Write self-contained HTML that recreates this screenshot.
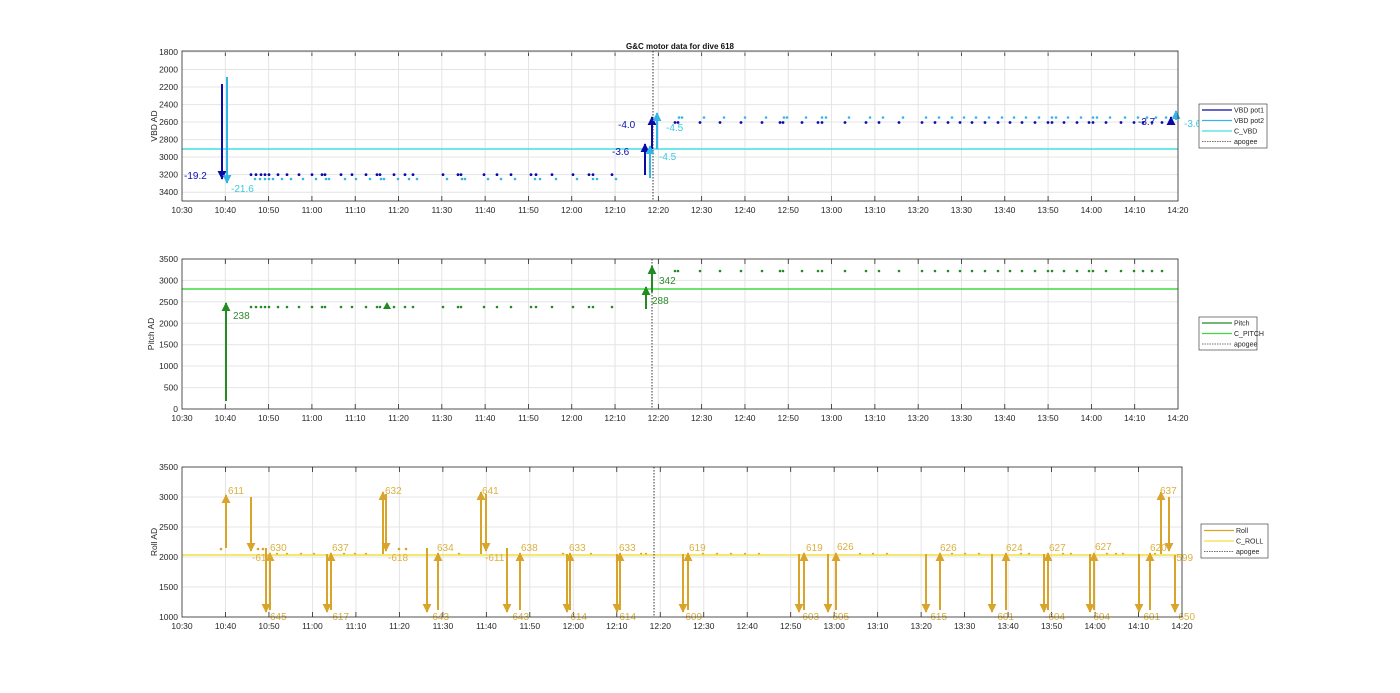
<!DOCTYPE html>
<html><head><meta charset="utf-8"><style>
html,body{margin:0;padding:0;background:#fff;}
svg{display:block;font-family:"Liberation Sans",sans-serif;}
.t{font-size:8.5px;fill:#262626;}
.yl{font-size:8.5px;fill:#262626;text-anchor:end;}
.xl{font-size:8.5px;fill:#262626;text-anchor:middle;}
.lg{font-size:7px;fill:#262626;}
.b{fill:#1010b0;font-size:10px;}
.c{fill:#3ec8e0;font-size:10px;}
.g{fill:#2e8b2e;font-size:10px;}
.r{fill:#dab040;font-size:10px;}
</style></head><body>
<svg width="1400" height="693" viewBox="0 0 1400 693" xmlns="http://www.w3.org/2000/svg">
<defs>
<marker id="mb" viewBox="0 0 10 10" refX="9" refY="5" markerWidth="9" markerHeight="9" markerUnits="userSpaceOnUse" orient="auto"><path d="M0,0L10,5L0,10z" fill="#0a0aa8"/></marker>
<marker id="mc" viewBox="0 0 10 10" refX="9" refY="5" markerWidth="9" markerHeight="9" markerUnits="userSpaceOnUse" orient="auto"><path d="M0,0L10,5L0,10z" fill="#33b5e8"/></marker>
<marker id="mg" viewBox="0 0 10 10" refX="9" refY="5" markerWidth="9" markerHeight="9" markerUnits="userSpaceOnUse" orient="auto"><path d="M0,0L10,5L0,10z" fill="#228b22"/></marker>
<marker id="mr" viewBox="0 0 10 10" refX="9" refY="5" markerWidth="9" markerHeight="9" markerUnits="userSpaceOnUse" orient="auto"><path d="M0,0L10,5L0,10z" fill="#d9a42a"/></marker>
</defs>
<g id="grids" stroke="#e4e4e4" stroke-width="1"></g>
<g id="dots"></g>

<!-- Title -->
<text x="680" y="49" text-anchor="middle" style="font-size:8px;font-weight:bold" fill="#111">G&amp;C motor data for dive 618</text>

<!-- TOP chart -->
<line x1="182" y1="149" x2="1178" y2="149" stroke="#40e0e0" stroke-width="1.5"/>
<line x1="653" y1="51" x2="653" y2="201" stroke="#333" stroke-width="1" stroke-dasharray="1.5,1.5"/>
<g stroke-width="2" fill="none">
<line x1="222" y1="84" x2="222" y2="179" stroke="#0a0aa8" marker-end="url(#mb)"/>
<line x1="227" y1="77" x2="227" y2="183" stroke="#33b5e8" marker-end="url(#mc)"/>
<line x1="645" y1="175" x2="645" y2="144" stroke="#0a0aa8" marker-end="url(#mb)"/>
<line x1="652" y1="149" x2="652" y2="117" stroke="#0a0aa8" marker-end="url(#mb)"/>
<line x1="650" y1="178" x2="650" y2="146" stroke="#33b5e8" marker-end="url(#mc)"/>
<line x1="657" y1="149" x2="657" y2="113" stroke="#33b5e8" marker-end="url(#mc)"/>
<line x1="1171" y1="124" x2="1171" y2="117" stroke="#0a0aa8" marker-end="url(#mb)"/>
<line x1="1176" y1="120" x2="1176" y2="111" stroke="#33b5e8" marker-end="url(#mc)"/>
</g>
<text class="b" x="184" y="179">-19.2</text>
<text class="c" x="231" y="192">-21.6</text>
<text class="b" x="618" y="128">-4.0</text>
<text class="b" x="612" y="155">-3.6</text>
<text class="c" x="666" y="131">-4.5</text>
<text class="c" x="659" y="160">-4.5</text>
<text class="b" x="1138" y="125">-3.7</text>
<text class="c" x="1184" y="127">-3.6</text>
<rect x="182" y="51" width="996" height="150" fill="none" stroke="#262626" stroke-width="0.8"/>
<text class="yl" x="178" y="55">1800</text><text class="yl" x="178" y="72.5">2000</text><text class="yl" x="178" y="90">2200</text><text class="yl" x="178" y="107.6">2400</text><text class="yl" x="178" y="125">2600</text><text class="yl" x="178" y="142.6">2800</text><text class="yl" x="178" y="160">3000</text><text class="yl" x="178" y="177.6">3200</text><text class="yl" x="178" y="195.2">3400</text>
<text class="t" transform="translate(157,126) rotate(-90)" text-anchor="middle">VBD AD</text>
<g id="xt1" class="xl"><text x="182" y="213">10:30</text><text x="225.3" y="213">10:40</text><text x="268.6" y="213">10:50</text><text x="311.9" y="213">11:00</text><text x="355.2" y="213">11:10</text><text x="398.5" y="213">11:20</text><text x="441.8" y="213">11:30</text><text x="485.1" y="213">11:40</text><text x="528.4" y="213">11:50</text><text x="571.7" y="213">12:00</text><text x="615" y="213">12:10</text><text x="658.3" y="213">12:20</text><text x="701.6" y="213">12:30</text><text x="744.9" y="213">12:40</text><text x="788.2" y="213">12:50</text><text x="831.5" y="213">13:00</text><text x="874.8" y="213">13:10</text><text x="918.1" y="213">13:20</text><text x="961.4" y="213">13:30</text><text x="1004.7" y="213">13:40</text><text x="1048" y="213">13:50</text><text x="1091.3" y="213">14:00</text><text x="1134.6" y="213">14:10</text><text x="1177.9" y="213">14:20</text></g>
<rect x="1199" y="104" width="68" height="44" fill="#fff" stroke="#262626" stroke-width="0.6"/>
<line x1="1202" y1="110" x2="1232" y2="110" stroke="#0a0aa8" stroke-width="1.3"/><text class="lg" x="1234" y="112.5">VBD pot1</text>
<line x1="1202" y1="120.5" x2="1232" y2="120.5" stroke="#33b5e8" stroke-width="1.3"/><text class="lg" x="1234" y="123">VBD pot2</text>
<line x1="1202" y1="131" x2="1232" y2="131" stroke="#40e0e0" stroke-width="1.3"/><text class="lg" x="1234" y="133.5">C_VBD</text>
<line x1="1202" y1="141.5" x2="1232" y2="141.5" stroke="#444" stroke-width="0.8" stroke-dasharray="1.5,1"/><text class="lg" x="1234" y="144">apogee</text>

<!-- PITCH chart -->
<line x1="182" y1="289" x2="1178" y2="289" stroke="#40d840" stroke-width="1.5"/>
<line x1="652" y1="259" x2="652" y2="409" stroke="#333" stroke-width="1" stroke-dasharray="1.5,1.5"/>
<g stroke="#228b22" stroke-width="2">
<line x1="226" y1="401" x2="226" y2="303" marker-end="url(#mg)"/>
<line x1="646" y1="309" x2="646" y2="287" marker-end="url(#mg)"/>
<line x1="652" y1="292" x2="652" y2="266" marker-end="url(#mg)"/>
</g>
<path d="M383,309L387,302L391,309z" fill="#228b22"/>
<text class="g" x="233" y="319">238</text>
<text class="g" x="652" y="304">288</text>
<text class="g" x="659" y="284">342</text>
<rect x="182" y="259" width="996" height="150" fill="none" stroke="#262626" stroke-width="0.8"/>
<text class="yl" x="178" y="262">3500</text><text class="yl" x="178" y="283.4">3000</text><text class="yl" x="178" y="304.9">2500</text><text class="yl" x="178" y="326.3">2000</text><text class="yl" x="178" y="347.7">1500</text><text class="yl" x="178" y="369">1000</text><text class="yl" x="178" y="390.6">500</text><text class="yl" x="178" y="412">0</text>
<text class="t" transform="translate(154,334) rotate(-90)" text-anchor="middle">Pitch AD</text>
<g class="xl" transform="translate(0,208)"><text x="182" y="213">10:30</text><text x="225.3" y="213">10:40</text><text x="268.6" y="213">10:50</text><text x="311.9" y="213">11:00</text><text x="355.2" y="213">11:10</text><text x="398.5" y="213">11:20</text><text x="441.8" y="213">11:30</text><text x="485.1" y="213">11:40</text><text x="528.4" y="213">11:50</text><text x="571.7" y="213">12:00</text><text x="615" y="213">12:10</text><text x="658.3" y="213">12:20</text><text x="701.6" y="213">12:30</text><text x="744.9" y="213">12:40</text><text x="788.2" y="213">12:50</text><text x="831.5" y="213">13:00</text><text x="874.8" y="213">13:10</text><text x="918.1" y="213">13:20</text><text x="961.4" y="213">13:30</text><text x="1004.7" y="213">13:40</text><text x="1048" y="213">13:50</text><text x="1091.3" y="213">14:00</text><text x="1134.6" y="213">14:10</text><text x="1177.9" y="213">14:20</text></g>
<rect x="1199" y="317" width="58" height="33" fill="#fff" stroke="#262626" stroke-width="0.6"/>
<line x1="1202" y1="323" x2="1232" y2="323" stroke="#228b22" stroke-width="1.3"/><text class="lg" x="1234" y="325.5">Pitch</text>
<line x1="1202" y1="333.5" x2="1232" y2="333.5" stroke="#40d840" stroke-width="1.3"/><text class="lg" x="1234" y="336">C_PITCH</text>
<line x1="1202" y1="344" x2="1232" y2="344" stroke="#444" stroke-width="0.8" stroke-dasharray="1.5,1"/><text class="lg" x="1234" y="346.5">apogee</text>

<!-- ROLL chart -->
<line x1="182" y1="555" x2="1182" y2="555" stroke="#f2e040" stroke-width="1.5"/>
<line x1="654" y1="467" x2="654" y2="617" stroke="#333" stroke-width="1" stroke-dasharray="1.5,1.5"/>
<g id="rollarrows" stroke="#d9a42a" stroke-width="2"></g>
<g class="r">
<text x="228" y="494">611</text><text x="252" y="561">-618</text><text x="270" y="620">645</text><text x="270" y="551">630</text>
<text x="332" y="551">637</text><text x="329" y="620">-617</text><text x="385" y="494">632</text><text x="388" y="561">-618</text>
<text x="429" y="620">-643</text><text x="437" y="551">634</text><text x="482" y="494">641</text><text x="485" y="561">-611</text>
<text x="509" y="620">-643</text><text x="521" y="551">638</text><text x="569" y="551">633</text><text x="567" y="620">-614</text>
<text x="619" y="551">633</text><text x="616" y="620">-614</text><text x="689" y="551">619</text><text x="682" y="620">-609</text>
<text x="806" y="551">619</text><text x="799" y="620">-603</text><text x="837" y="550">626</text><text x="829" y="620">-605</text>
<text x="940" y="551">626</text><text x="927" y="620">-615</text><text x="1006" y="551">624</text><text x="994" y="620">-601</text>
<text x="1049" y="551">627</text><text x="1045" y="620">-604</text><text x="1095" y="550">627</text><text x="1090" y="620">-604</text>
<text x="1150" y="551">620</text><text x="1140" y="620">-601</text><text x="1160" y="494">637</text><text x="1173" y="561">-599</text><text x="1175" y="620">-650</text>
</g>
<rect x="182" y="467" width="1000" height="150" fill="none" stroke="#262626" stroke-width="0.8"/>
<text class="yl" x="178" y="470">3500</text><text class="yl" x="178" y="500">3000</text><text class="yl" x="178" y="530">2500</text><text class="yl" x="178" y="560">2000</text><text class="yl" x="178" y="590">1500</text><text class="yl" x="178" y="620">1000</text>
<text class="t" transform="translate(157,542) rotate(-90)" text-anchor="middle">Roll AD</text>
<g class="xl" transform="translate(0,416)"><text x="182" y="213">10:30</text><text x="225.5" y="213">10:40</text><text x="269" y="213">10:50</text><text x="312.4" y="213">11:00</text><text x="355.9" y="213">11:10</text><text x="399.4" y="213">11:20</text><text x="442.9" y="213">11:30</text><text x="486.4" y="213">11:40</text><text x="529.8" y="213">11:50</text><text x="573.3" y="213">12:00</text><text x="616.8" y="213">12:10</text><text x="660.3" y="213">12:20</text><text x="703.8" y="213">12:30</text><text x="747.2" y="213">12:40</text><text x="790.7" y="213">12:50</text><text x="834.2" y="213">13:00</text><text x="877.7" y="213">13:10</text><text x="921.2" y="213">13:20</text><text x="964.6" y="213">13:30</text><text x="1008.1" y="213">13:40</text><text x="1051.6" y="213">13:50</text><text x="1095.1" y="213">14:00</text><text x="1138.6" y="213">14:10</text><text x="1182" y="213">14:20</text></g>
<rect x="1201" y="524" width="67" height="34" fill="#fff" stroke="#262626" stroke-width="0.6"/>
<line x1="1204" y1="530.5" x2="1234" y2="530.5" stroke="#d9a42a" stroke-width="1.3"/><text class="lg" x="1236" y="533">Roll</text>
<line x1="1204" y1="541" x2="1234" y2="541" stroke="#f2e040" stroke-width="1.3"/><text class="lg" x="1236" y="543.5">C_ROLL</text>
<line x1="1204" y1="551.5" x2="1234" y2="551.5" stroke="#444" stroke-width="0.8" stroke-dasharray="1.5,1"/><text class="lg" x="1236" y="554">apogee</text>
</svg>
<script>
(function(){
var NS="http://www.w3.org/2000/svg";
function el(p,n,a){var e=document.createElementNS(NS,n);for(var k in a)e.setAttribute(k,a[k]);p.appendChild(e);return e;}
var g=document.getElementById('grids');
var charts=[[51,201,1178,[52,69.5,87,104.6,122,139.6,157,174.6,192.2]],[259,409,1178,[280.4,301.9,323.3,344.7,366,387.6]],[467,617,1182,[497,527,557,587]]];
charts.forEach(function(c){
 var w=(c[2]-182)/23;
 for(var i=1;i<23;i++){var x=182+i*w;el(g,'line',{x1:x,y1:c[0],x2:x,y2:c[1]});
  el(g,'line',{x1:x,y1:c[1],x2:x,y2:c[1]-5,stroke:'#262626','stroke-width':0.8});
  el(g,'line',{x1:x,y1:c[0],x2:x,y2:c[0]+5,stroke:'#262626','stroke-width':0.8});}
 c[3].forEach(function(y){el(g,'line',{x1:182,y1:y,x2:c[2],y2:y});});
});
var d=document.getElementById('dots');
var L=[251,256,261,265,269,278,287,299,312,322,325,341,352,366,377,380,394,405,413,443,458,461,484,497,511,531,536,552,573,589,593,612];
var R=[675,678,700,720,741,762,780,783,802,818,822,845,866,879,899,922,935,948,960,972,985,998,1010,1022,1035,1048,1052,1064,1077,1089,1093,1106,1121,1134,1143,1152,1162];
L.forEach(function(x){el(d,'circle',{cx:x,cy:174.6,r:1.4,fill:'#0a0aa8'});el(d,'circle',{cx:x+4,cy:179,r:1.3,fill:'#33b5e8'});el(d,'circle',{cx:x,cy:307,r:1.3,fill:'#228b22'});});
R.forEach(function(x){el(d,'circle',{cx:x,cy:122.5,r:1.4,fill:'#0a0aa8'});el(d,'circle',{cx:x+4,cy:117.5,r:1.3,fill:'#33b5e8'});el(d,'circle',{cx:x,cy:271,r:1.3,fill:'#228b22'});});
[221,258,263,399,406].forEach(function(x){el(d,'circle',{cx:x,cy:549,r:1.3,fill:'#d9a42a'});});
[277,287,301,314,344,355,366,459,563,591,641,646,703,717,731,745,759,860,873,887,952,965,979,1021,1029,1063,1071,1107,1116,1123,1155].forEach(function(x){el(d,'circle',{cx:x,cy:554,r:1.2,fill:'#d9a42a'});});
var ra=document.getElementById('rollarrows');
var A=[[226,548,495],[251,497,551],[266,548,612],[270,610,553],[327,554,612],[331,610,553],[383,554,492],[386,494,551],[427,548,612],[438,610,553],[481,554,492],[486,494,551],[507,548,612],[520,610,553],[567,554,612],[570,610,553],[617,554,612],[620,610,553],[683,554,612],[688,610,553],[799,554,612],[804,610,553],[828,554,612],[836,610,553],[926,554,612],[940,610,553],[992,554,612],[1006,610,553],[1044,554,612],[1048,610,553],[1090,554,612],[1094,610,553],[1139,554,612],[1150,610,553],[1161,554,492],[1169,497,551],[1175,555,612]];
A.forEach(function(a){el(ra,'line',{x1:a[0],y1:a[1],x2:a[0],y2:a[2],'marker-end':'url(#mr)'});});
})();
</script>
</body></html>
